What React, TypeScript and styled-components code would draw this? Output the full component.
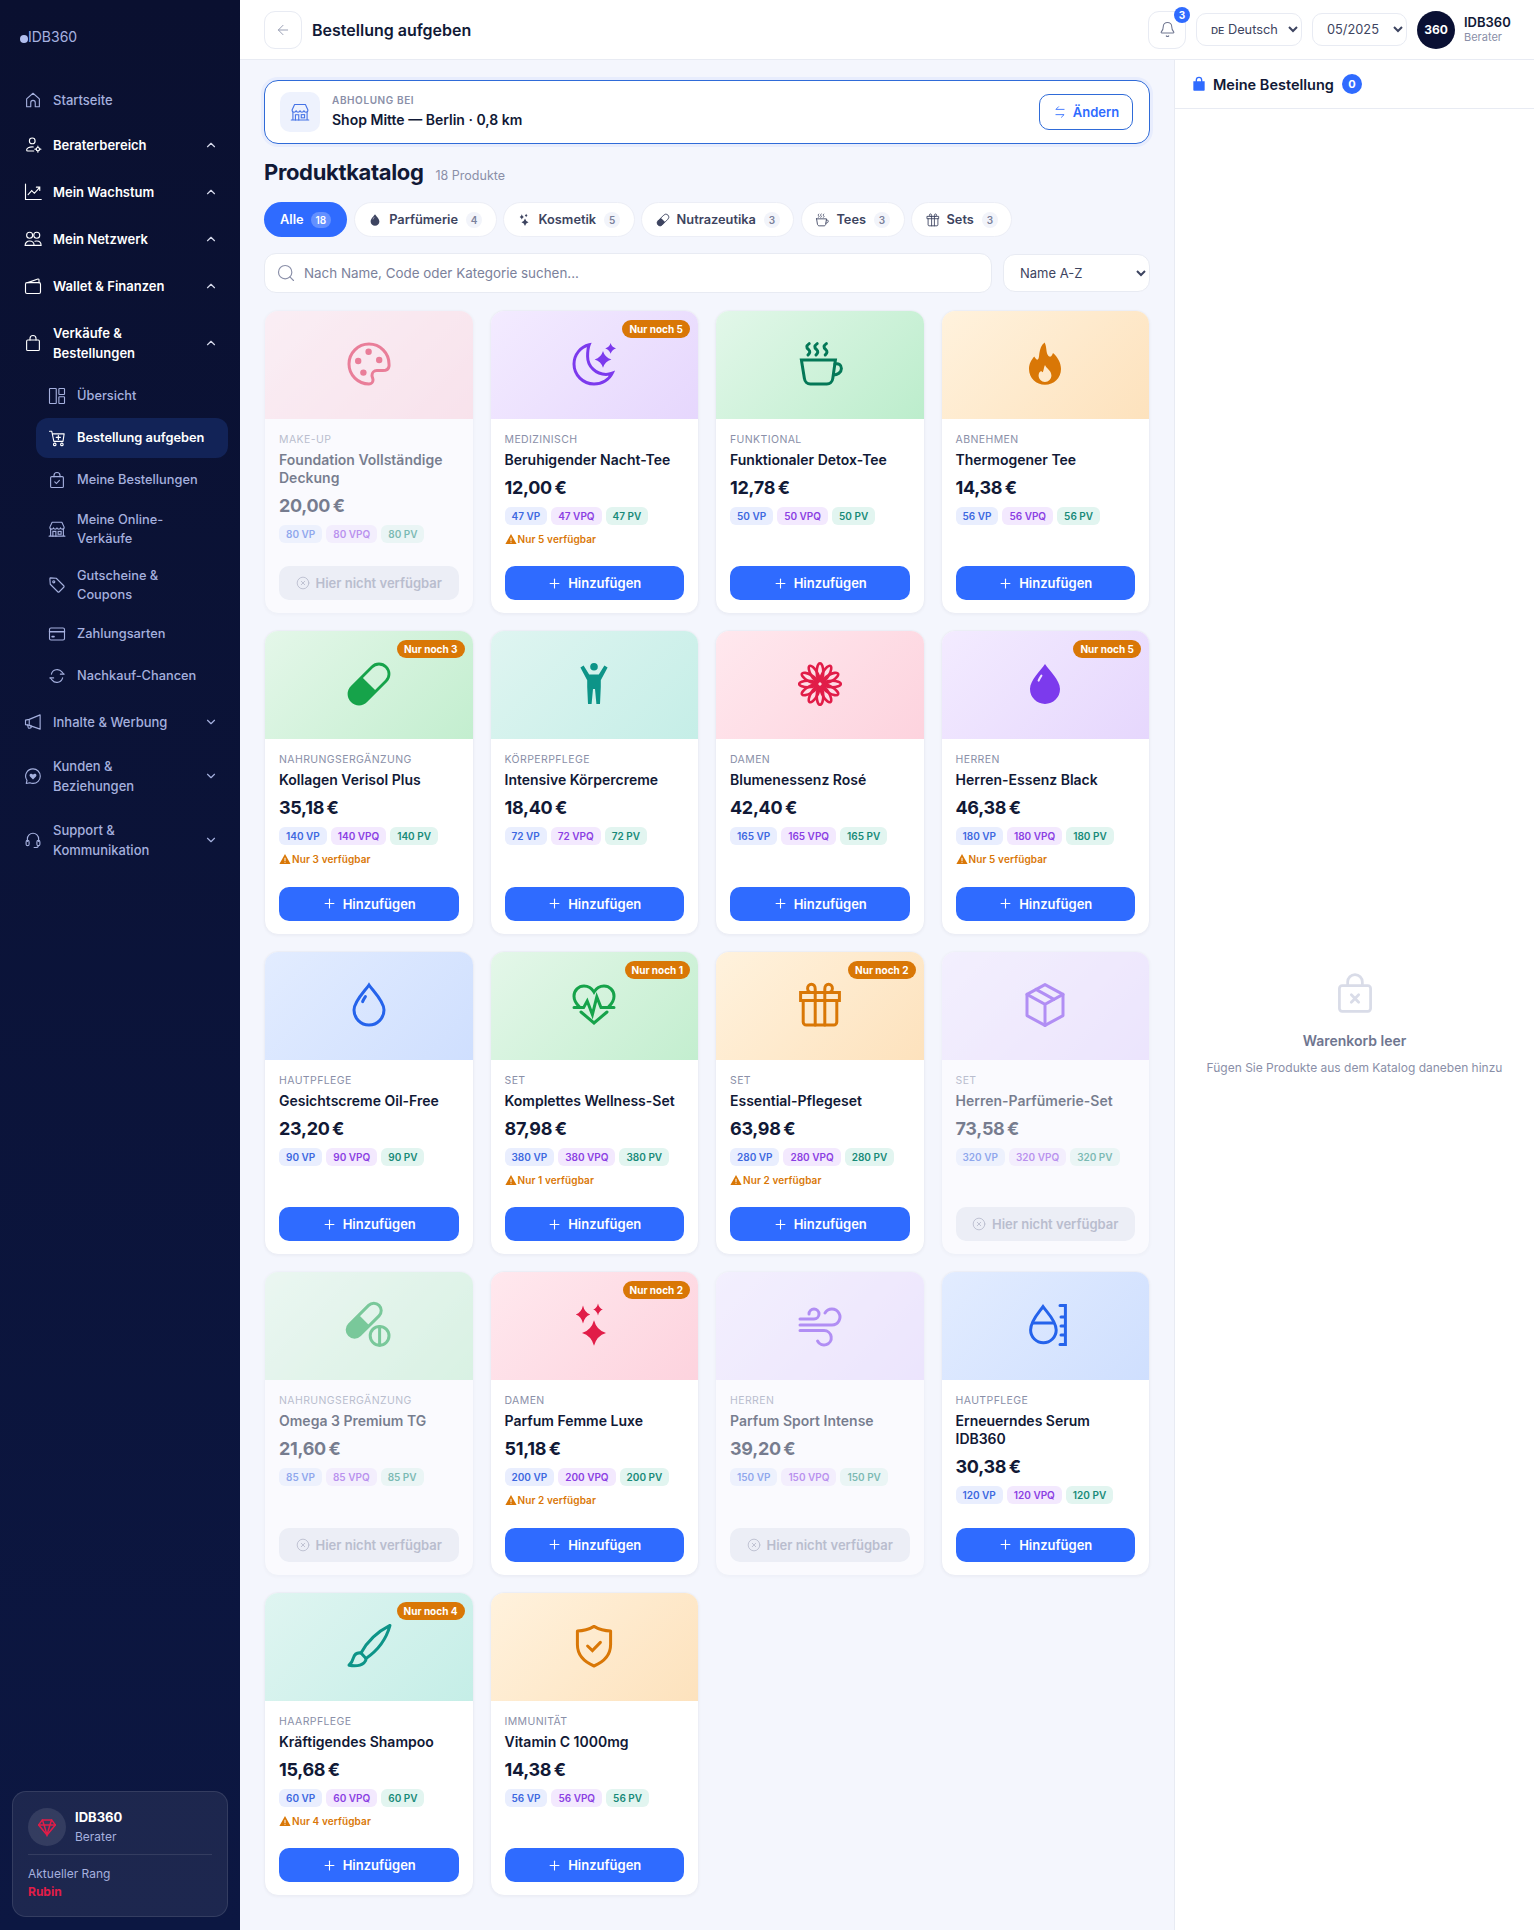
import React from 'react';
import styled, { createGlobalStyle } from 'styled-components';
import { ArrowLeft, Bell, ChevronDown, ChevronUp, Plus, Search, XCircle } from 'lucide-react';

const GlobalStyle = createGlobalStyle`
  * { box-sizing: border-box; }
  body {
    margin: 0;
    background: #f4f6fd;
    font-family: 'Inter', 'Liberation Sans', sans-serif;
    color: #111936;
  }
  select, input, button { font-family: inherit; }
`;

// 4-point star used by the sparkle style icons
const star = (cx: number, cy: number, rx: number, ry: number = rx) => {
  const kx = rx * 0.22;
  const ky = ry * 0.22;
  return `M${cx} ${cy - ry}Q${cx + kx} ${cy - ky} ${cx + rx} ${cy}Q${cx + kx} ${cy + ky} ${cx} ${cy + ry}Q${cx - kx} ${cy + ky} ${cx - rx} ${cy}Q${cx - kx} ${cy - ky} ${cx} ${cy - ry}Z`;
};

const F = { fill: 'currentColor', stroke: 'none' };

const glyphs: Record<string, React.ReactNode> = {
  palette: (
    <>
      <path d="M12 2C6.5 2 2 6.5 2 12s4.5 10 10 10c1.2 0 2-.9 2-2 0-.8-.5-1.400-.5-2.300 0-1.300 1-2.400 2.400-2.400h3c1.600 0 2.900-.6 3.100-2.200.1-.4 0-.9 0-1.100C22 6.500 17.500 2 12 2z" />
      <circle cx="11.800" cy="5.900" r="1.600" {...F} />
      <circle cx="17.100" cy="10" r="1.600" {...F} />
      <circle cx="6.600" cy="10.500" r="1.600" {...F} />
      <circle cx="9.200" cy="16.300" r="1.600" {...F} />
    </>
  ),
  moon: (
    <>
      <path d="M9.600 2.400C5.300 3.400 2 7.300 2 12c0 5.500 4.500 10 10 10 4.100 0 7.600-2.200 9.100-5.400-1 .4-2.100.6-3.100.6-5 0-9.200-4-9.200-9 0-2 .2-4.300.8-5.800z" />
      <path d={star(16.5, 9.7, 4.2)} {...F} />
      <path d={star(20.3, 4.2, 2.7)} {...F} />
    </>
  ),
  coffee: (
    <>
      <path d="M2.700 10h17l-1.300 9.200c-.2 1.600-1.400 2.800-3 2.800H7.200c-1.600 0-2.800-1.200-3-2.800L2.700 10z" />
      <path d="M19.500 12c1.800-.5 3.200.5 3.200 2.200 0 2-2 3.300-4 3.300" />
      <path d="M6.600 1.800c-1.500 1.100-1.500 1.900-.4 2.900 1 .9.900 1.900-.2 2.800M10.600 1.800c-1.500 1.100-1.500 1.900-.4 2.900 1 .9.900 1.900-.2 2.800M15.200 1.800c-1.500 1.100-1.500 1.900-.4 2.900 1 .9.900 1.900-.2 2.800" />
    </>
  ),
  fire: (
    <path
      {...F}
      fillRule="evenodd"
      d="M11.800 1.300c1.200 2.400.6 4.600 1.600 6.200.6 1 1.600 1.200 2.200-.1l.4-.9c2.300 2 4 5 4 8 0 4.600-3.600 7.900-8 7.900s-8-3.300-8-7.900c0-2.600 1.200-4.500 2.600-6.200.6 1 1.100 1.500 1.600 1.600.9-.4.8-2.200 1-3.400.3-2 1-4 2.600-5.200zM12 12.500c.4 1.500 3.200 2.600 3.200 5.300 0 1.800-1.400 3.200-3.200 3.200s-3.200-1.400-3.200-3.200c0-1.400.8-2.200 1.300-2.300.3.3.5.6.8.6.5-1 .5-2.500 1.100-3.600z"
    />
  ),
  pill: (
    <g transform="rotate(-45 12 12)">
      <rect x="-0.070" y="7" width="24.140" height="10" rx="5" strokeWidth="1.400" />
      <path {...F} d="M12 7H5a5 5 0 0 0 0 10h7z" />
    </g>
  ),
  person: (
    <>
      <circle cx="12" cy="3.400" r="1.900" {...F} />
      <path
        {...F}
        d="M5.200 3.700L6.800 2.800l2.800 4.400h4.800l2.800-4.400 1.600.9-3.400 6.400v3.400L15 22h-1.800l-.7-7.500h-1L10.800 22H9l-.4-8.500v-3.400z"
      />
    </>
  ),
  flower: (
    <>
      {Array.from({ length: 12 }).map((_, i) => (
        <ellipse key={i} cx="12" cy="6" rx="1.650" ry="4.400" strokeWidth="1.300" transform={`rotate(${i * 30} 12 12)`} />
      ))}
      <circle cx="12" cy="12" r="1.500" strokeWidth="1.300" />
    </>
  ),
  dropFill: (
    <>
      <path {...F} d="M12 2C10 5 4.500 10 4.500 14.500a7.500 7.500 0 0 0 15 0C19.500 10 14 5 12 2z" />
      <path d="M10.200 7.800c-.6.9-1.100 1.700-1.400 2.500" stroke="#f0e4ff" strokeWidth="1" />
    </>
  ),
  drop: (
    <>
      <path d="M12 2C10 5 4.500 10 4.500 14.500a7.500 7.500 0 0 0 15 0C19.500 10 14 5 12 2z" />
      <path d="M10.200 7.800c-.6.9-1.100 1.700-1.400 2.500" />
    </>
  ),
  heart: (
    <>
      <path d="M4.600 12.800C3 11.200 2 9.500 2 7.600 2 4.700 4.300 2.500 7 2.500c2 0 3.800 1 5 3 1.200-2 3-3 5-3 2.700 0 5 2.200 5 5.100 0 1.900-1 3.600-2.600 5.200" />
      <path d="M5.500 15.500L12 21l6.500-5.500" />
      <path d="M2 13.300h4.800l1.800-3.300 2.600 6.800L13.400 8l2.100 5.300H22" />
    </>
  ),
  gift: (
    <>
      <path d="M2.300 5.800h19.400v4H2.300zM3.600 9.800v10.700c0 .8.700 1.500 1.500 1.500h13.800c.8 0 1.500-.7 1.500-1.500V9.800" />
      <path d="M9.600 5.800V22M14.400 5.800V22" />
      <path d="M9.600 5.800V4c0-1.400-.8-2.400-1.900-2.400S5.800 2.500 5.800 3.700c0 1.300 1 2.100 2.400 2.100M14.400 5.800V4c0-1.400.8-2.400 1.900-2.400s1.900.9 1.900 2.100c0 1.300-1 2.100-2.400 2.100" />
    </>
  ),
  box: (
    <>
      <path d="M12 1.800l9 4.900v10.600l-9 4.900-9-4.900V6.700z" strokeLinejoin="round" />
      <path d="M3 6.700l9 5 9-5M12 11.700v10.500M7.500 4.200l9 5" />
    </>
  ),
  pills: (
    <>
      <g transform="rotate(-45 9.600 9.600)">
        <rect x="-0.900" y="5.900" width="21" height="7.400" rx="3.700" />
        <path {...F} d="M9.600 5.900H2.800a3.700 3.700 0 0 0 0 7.400h6.800z" />
      </g>
      <circle cx="17.300" cy="17.400" r="4.700" />
      <path d="M17.300 12.700v9.400" />
    </>
  ),
  stars: (
    <>
      <path d={star(12, 16, 6, 6.400)} {...F} />
      <path d={star(6.500, 6.700, 3.600, 4.500)} {...F} />
      <path d={star(14, 4.200, 2.400, 3)} {...F} />
    </>
  ),
  wind: (
    <>
      <path d="M2 9h7a2.500 2.500 0 1 0-2.500-2.500" />
      <path d="M2 12h16a4 4 0 1 0-3.500-6" />
      <path d="M2 14.800h12a3.600 3.600 0 1 1-3.200 5.200" />
    </>
  ),
  serum: (
    <>
      <path d="M11 2.800C9.200 5.500 4.800 9.800 4.800 14.500a6.400 6.400 0 0 0 12.800 0C17.600 9.800 12.800 5.500 11 2.800z" />
      <path d="M6 11h10" />
      <path d="M19.500 2.300h2.700v19.400h-2.700M20 8h2.200M20 12.500h2.200M20 17h2.200" />
    </>
  ),
  brush: (
    <>
      <path d="M22.500 1.700C16 5 11 10 8 15.500l2.500 2.700C16 14.500 20.500 9 22.500 1.700z" strokeLinejoin="round" />
      <path d="M8 15.500c-2-.3-3.300.7-3.800 2.400-.3 1.200-1 2.600-2.200 3.700 3 .5 6 .1 7.500-1.200.8-.7 1.100-1.500 1-2.200" strokeLinejoin="round" />
    </>
  ),
  shield: (
    <>
      <path d="M12 2.200C9.500 3.700 6.500 4.500 3.700 4.500v6.800c0 5 3.500 8.700 8.300 10.700 4.800-2 8.300-5.700 8.300-10.700V4.500c-2.800 0-5.800-.8-8.300-2.300z" strokeLinejoin="round" />
      <path d="M8.800 12l2.400 2.300 4-4.100" />
    </>
  ),
  home: <path d="M12 3l8.500 7.500V21H15v-5.500a3 3 0 0 0-6 0V21H3.500V10.500z" strokeLinejoin="round" />,
  userGear: (
    <>
      <circle cx="11" cy="6.500" r="3.800" />
      <path d="M12.500 14.600c-.5-.1-1-.1-1.500-.1-4 0-7.500 1.800-7.500 4.200 0 .8.700 1.300 1.500 1.300h8" />
      <circle cx="18.500" cy="17.500" r="2.200" />
      <path d="M18.500 13.500v1.800M18.500 19.700v1.800M14.500 17.500h1.800M20.700 17.500h1.800" />
    </>
  ),
  chart: (
    <>
      <path d="M2 1.500V22h21" />
      <path d="M5.500 15.500l4.800-5.300 3.500 3.500 7-7.700M16.500 5.500H21V10" />
    </>
  ),
  users: (
    <>
      <circle cx="7.500" cy="7" r="4" />
      <circle cx="17" cy="7" r="4" />
      <path d="M1.500 20.500c0-3.300 2.600-5.800 6-5.800s6 2.500 6 5.800zM14.500 14.900c.8-.2 1.600-.2 2.500-.2 3.400 0 5.800 2.500 5.800 5.800h-9" />
    </>
  ),
  wallet: (
    <>
      <rect x="2" y="7.500" width="20" height="14.500" rx="2" />
      <path d="M5 7.500l13.500-4.800c1-.3 1.500.2 1.500 1.200v3.600" />
    </>
  ),
  bag: (
    <>
      <rect x="3.500" y="8" width="17" height="14" rx="1.500" />
      <path d="M8 8V6a4 4 0 0 1 8 0v2" />
    </>
  ),
  bagFill: (
    <>
      <path {...F} d="M3.500 8h17v12.500c0 .8-.7 1.500-1.500 1.500H5c-.8 0-1.500-.7-1.500-1.500z" />
      <path d="M8 10V6a4 4 0 0 1 8 0v4" strokeWidth="2" />
    </>
  ),
  bagX: (
    <>
      <rect x="3.500" y="8" width="17" height="14" rx="1.500" />
      <path d="M8 8V6a4 4 0 0 1 8 0v2M10 13l4 4M14 13l-4 4" />
    </>
  ),
  layout: (
    <>
      <rect x="2" y="2" width="9" height="20" rx=".8" />
      <rect x="14.500" y="2" width="7.500" height="8" rx=".8" />
      <rect x="14.500" y="13" width="7.500" height="9" rx=".8" />
    </>
  ),
  cart: (
    <>
      <path d="M2 3h3l2.800 13.500h12.200l1.500-10H5.800" strokeLinejoin="round" />
      <circle cx="9" cy="20.500" r="1.700" />
      <circle cx="18.500" cy="20.500" r="1.700" />
      <path d="M13.800 8.500v5.500M11 11.200h5.500" />
    </>
  ),
  bagCheck: (
    <>
      <rect x="3.500" y="7.500" width="17" height="14.500" rx="1.500" />
      <path d="M8 7.500V6a4 4 0 0 1 8 0v1.500M9 14.500l2.200 2.200 4-4.200" />
    </>
  ),
  store: (
    <>
      <path d="M5.500 3h13l3 6.500c0 1.600-1.200 2.700-2.400 2.700-1.100 0-2.100-.8-2.400-1.800-.3 1-1.400 1.800-2.400 1.800S12.300 11.400 12 10.400c-.3 1-1.300 1.800-2.300 1.800s-2.100-.8-2.400-1.800c-.3 1-1.300 1.800-2.400 1.800-1.200 0-2.400-1.100-2.400-2.700z" strokeLinejoin="round" />
      <path d="M3.500 12.200V21.500h17v-9.300M1.500 21.500h21" />
      <path d="M6.500 21.500v-6.300h4v6.300" />
      <rect x="13.500" y="15.200" width="4" height="3.800" />
    </>
  ),
  tag: (
    <>
      <path d="M3.500 2.500l7.500.5 10 10c.6.6.6 1.500 0 2l-6 6c-.6.6-1.400.6-2 0l-10-10-.5-7.500c0-.5.5-1 1-1z" strokeLinejoin="round" />
      <circle cx="7.700" cy="7.700" r="1.400" />
    </>
  ),
  card: (
    <>
      <rect x="2" y="4" width="20" height="16" rx="2" />
      <path d="M2 9h20" strokeWidth="2" />
      <path d="M5.500 15.500h2.500" strokeWidth="2.200" />
    </>
  ),
  refresh: (
    <>
      <path d="M4.500 9.500A8 8 0 0 1 18.500 6.500L20.500 9" />
      <path d="M19.500 14.500A8 8 0 0 1 5.500 17.500L3.500 15" />
      <path d="M21.500 9.500h-5M2.500 14.500h5" />
    </>
  ),
  megaphone: (
    <>
      <path d="M2 9.500l5-1v8l-5-1zM7 8.500L21.500 2.500v19L7 16.500" strokeLinejoin="round" />
      <path d="M4.800 15.800l.9 3.700c.2.700.8 1 1.500.8l1.600-.5c.7-.2 1-.9.800-1.500l-.6-2" />
    </>
  ),
  chatHeart: (
    <>
      <path d="M12 2.500a9.700 9.700 0 0 1 0 19.400c-1.500 0-2.900-.3-4.200-.9l-4.800 1 1-4.200A9.700 9.700 0 0 1 12 2.500z" strokeLinejoin="round" />
      <path {...F} d="M12 16.500l-4-4c-1-1.100-.8-3 .8-3.500 1.200-.4 2.500.1 3.200 1.200.7-1.100 2-1.600 3.200-1.200 1.600.5 1.800 2.400.8 3.500z" />
    </>
  ),
  headset: (
    <>
      <path d="M4.500 14v-3.500a7.500 7.500 0 0 1 15 0V14" />
      <rect x="2.800" y="12.500" width="4" height="7" rx="2" />
      <rect x="17.200" y="12.500" width="4" height="7" rx="2" />
      <path d="M19 19.500c0 1.500-1.500 2.500-3 2.500h-2.500" />
    </>
  ),
  swap: <path d="M9.500 3L5 7.500h14M14.500 21L19 16.500H5" strokeLinejoin="round" />,
  gem: (
    <>
      <path d="M6.500 3.500h11L22 9.500 12 21.500 2 9.500z" strokeLinejoin="round" />
      <path d="M2 9.500h20M8.500 9.500L12 21.500l3.500-12M6.500 3.500l2 6M17.500 3.500l-2 6" />
    </>
  ),
  warn: <path {...F} fillRule="evenodd" d="M12 2L.8 22h22.400zM11 9.500h2v6.500h-2zM11 17.500h2v2.200h-2z" />,
};

const Glyph = ({ name, size = 18, weight = 1.5 }: { name: string; size?: number; weight?: number }) => (
  <svg
    viewBox="0 0 24 24"
    width={size}
    height={size}
    fill="none"
    stroke="currentColor"
    strokeWidth={weight}
    strokeLinecap="round"
    style={{ flexShrink: 0 }}
  >
    {glyphs[name]}
  </svg>
);

/* layout */
const Shell = styled.div`
  display: flex;
  min-height: 100vh;
`;

const Sidebar = styled.aside`
  width: 240px;
  flex-shrink: 0;
  display: flex;
  flex-direction: column;
  background: linear-gradient(180deg, #0a1030 0%, #0c1742 100%);
  padding: 0 12px 13px;
`;

const Logo = styled.div`
  height: 81px;
  padding: 28px 0 0 8px;
  display: flex;
  align-items: flex-start;
  font-size: 14px;
  line-height: 18px;
  color: #a7b2e0;
`;

const LogoDot = styled.span`
  width: 8px;
  height: 8px;
  flex-shrink: 0;
  border-radius: 50%;
  background: #b3bfee;
  margin-top: 7px;
`;

const NavRow = styled.div<{ $strong?: boolean; $plain?: boolean; $tail: number }>`
  display: flex;
  align-items: center;
  gap: 11px;
  padding: ${(p) => (p.$plain ? '9px' : '11px')} 10px ${(p) => (p.$plain ? '9px' : '11px')} 12px;
  margin-bottom: ${(p) => p.$tail}px;
  font-size: 13px;
  line-height: 20px;
  font-weight: ${(p) => (p.$strong ? 600 : 500)};
  color: ${(p) => (p.$strong ? '#ffffff' : '#a5b0de')};
`;

const NavLabel = styled.span`
  flex: 1;
  min-width: 0;
`;

const NavChevron = styled.span<{ $open?: boolean }>`
  display: flex;
  color: ${(p) => (p.$open ? '#d5d9ea' : '#a5b0de')};
`;

const SubList = styled.div`
  display: flex;
  flex-direction: column;
  gap: 2px;
  padding-left: 24px;
  margin: -3px 0 5px;
`;

const SubRow = styled.div<{ $active?: boolean }>`
  display: flex;
  align-items: center;
  gap: 11px;
  min-height: 40px;
  padding: 7.500px 12px;
  border-radius: 12px;
  font-size: 12.800px;
  line-height: 19.500px;
  font-weight: ${(p) => (p.$active ? 600 : 500)};
  color: ${(p) => (p.$active ? '#ffffff' : '#a5b0de')};
  background: ${(p) => (p.$active ? '#122357' : 'transparent')};
`;

const RankCard = styled.div`
  margin-top: auto;
  border: 1px solid rgba(255, 255, 255, 0.1);
  border-radius: 14px;
  background: rgba(255, 255, 255, 0.07);
  padding: 16px 15px 15px;
`;

const RankTop = styled.div`
  display: flex;
  align-items: center;
  gap: 9px;
  padding-bottom: 8px;
  border-bottom: 1px solid rgba(255, 255, 255, 0.1);
`;

const RankAvatar = styled.div`
  width: 38px;
  height: 38px;
  border-radius: 50%;
  background: rgba(255, 255, 255, 0.1);
  color: #e11d48;
  display: flex;
  align-items: center;
  justify-content: center;
`;

const RankName = styled.div`
  font-size: 13px;
  line-height: 19px;
  font-weight: 700;
  color: #ffffff;
`;

const RankRole = styled.div`
  font-size: 12px;
  line-height: 19px;
  color: #a5b0de;
`;

const RankLabel = styled.div`
  margin-top: 10px;
  font-size: 12px;
  line-height: 18px;
  color: #a5b0de;
`;

const RankValue = styled.div`
  font-size: 12px;
  line-height: 18px;
  font-weight: 700;
  color: #e11d48;
`;

const Workspace = styled.div`
  flex: 1;
  min-width: 0;
  display: flex;
  flex-direction: column;
`;

const TopBar = styled.header`
  height: 60px;
  background: #ffffff;
  border-bottom: 1px solid #e8ebf3;
  display: flex;
  align-items: center;
  padding: 0 24px;
  gap: 10px;
`;

const SquareButton = styled.button`
  position: relative;
  width: 38px;
  height: 38px;
  padding: 0;
  border: 1px solid #e8ebf3;
  border-radius: 11px;
  background: #ffffff;
  color: #6f7690;
  display: flex;
  align-items: center;
  justify-content: center;
`;

const PageTitle = styled.h1`
  flex: 1;
  margin: 0;
  font-size: 16px;
  font-weight: 600;
  color: #111936;
`;

const CountDot = styled.span`
  position: absolute;
  top: -5px;
  right: -5px;
  width: 16px;
  height: 16px;
  border-radius: 50%;
  background: #2f6bff;
  color: #ffffff;
  font-size: 10px;
  font-weight: 700;
  display: flex;
  align-items: center;
  justify-content: center;
`;

const BarSelect = styled.select<{ $w: number }>`
  width: ${(p) => p.$w}px;
  height: 33px;
  padding: 0 4px 0 10px;
  border: 1px solid #e8ebf3;
  border-radius: 10px;
  background: #ffffff;
  font-size: 12.800px;
  color: #3d4460;
`;

const UserBox = styled.div`
  display: flex;
  align-items: center;
  gap: 9px;
  width: 93px;
`;

const UserAvatar = styled.div`
  width: 38px;
  height: 38px;
  flex-shrink: 0;
  border-radius: 50%;
  background: #0a1033;
  color: #ffffff;
  font-size: 12px;
  font-weight: 700;
  display: flex;
  align-items: center;
  justify-content: center;
`;

const UserName = styled.div`
  font-size: 13px;
  line-height: 16px;
  font-weight: 600;
`;

const UserRole = styled.div`
  font-size: 11px;
  line-height: 15px;
  color: #8a8fa8;
`;

const Split = styled.div`
  flex: 1;
  display: flex;
`;

const Catalog = styled.main`
  flex: 1;
  min-width: 0;
  padding: 20px 24px 33px;
`;

const PickupBox = styled.section`
  height: 64px;
  display: flex;
  align-items: center;
  padding: 0 15px;
  gap: 12px;
  background: #ffffff;
  border: 1.500px solid #2f6bd8;
  border-radius: 14px;
  box-shadow: 0 0 0 3px rgba(47, 107, 255, 0.06);
`;

const PickupIcon = styled.div`
  width: 40px;
  height: 40px;
  border-radius: 10px;
  background: #eef2fd;
  color: #4472e6;
  display: flex;
  align-items: center;
  justify-content: center;
`;

const PickupText = styled.div`
  flex: 1;
  padding-bottom: 2px;
`;

const PickupLabel = styled.div`
  font-size: 10px;
  line-height: 14px;
  font-weight: 600;
  letter-spacing: 0.6px;
  color: #8a8fa8;
`;

const PickupName = styled.div`
  margin-top: 4px;
  font-size: 14px;
  line-height: 18px;
  font-weight: 600;
`;

const ChangeButton = styled.button`
  width: 94px;
  height: 36px;
  margin-right: 1px;
  display: flex;
  align-items: center;
  justify-content: center;
  gap: 6px;
  background: #ffffff;
  border: 1.500px solid #2f6bd8;
  border-radius: 10px;
  color: #2f6bff;
  font-size: 13px;
  font-weight: 600;
`;

const CatalogHead = styled.div`
  display: flex;
  align-items: baseline;
  gap: 12px;
  margin-top: 13px;
  height: 32px;
`;

const CatalogTitle = styled.h2`
  margin: 0;
  font-size: 22px;
  line-height: 30px;
  font-weight: 700;
  letter-spacing: -0.35px;
  color: #111936;
`;

const CatalogCount = styled.span`
  font-size: 12.500px;
  color: #8a8fa8;
`;

const Pills = styled.div`
  display: flex;
  gap: 6.500px;
  margin-top: 13px;
`;

const Pill = styled.button<{ $active?: boolean }>`
  height: 35px;
  padding: 0 ${(p) => (p.$active ? 16 : 13.500)}px;
  display: flex;
  align-items: center;
  gap: 7px;
  border-radius: 18px;
  border: ${(p) => (p.$active ? 'none' : '1px solid #eceef6')};
  background: ${(p) => (p.$active ? '#2f6bff' : '#ffffff')};
  color: ${(p) => (p.$active ? '#ffffff' : '#3d4460')};
  font-size: 12.800px;
  font-weight: 600;
`;

const PillCount = styled.span<{ $active?: boolean }>`
  min-width: 16px;
  height: 16px;
  padding: 0 ${(p) => (p.$active ? 5 : 4)}px;
  margin-left: ${(p) => (p.$active ? 0 : 1)}px;
  border-radius: 8px;
  background: ${(p) => (p.$active ? 'rgba(255,255,255,0.25)' : '#f2f4fa')};
  color: ${(p) => (p.$active ? '#ffffff' : '#7b819b')};
  font-size: 10px;
  font-weight: 600;
  display: flex;
  align-items: center;
  justify-content: center;
`;

const SearchRow = styled.div`
  display: flex;
  align-items: center;
  gap: 11px;
  margin-top: 16px;
`;

const SearchBox = styled.label`
  flex: 1;
  height: 40px;
  display: flex;
  align-items: center;
  gap: 8px;
  padding: 0 11px;
  background: #ffffff;
  border: 1px solid #e8ebf3;
  border-radius: 12px;
  color: #8a8fa8;
`;

const SearchInput = styled.input`
  flex: 1;
  padding: 0;
  border: none;
  outline: none;
  background: transparent;
  font-size: 13.400px;
  &::placeholder {
    color: #7b819b;
  }
`;

const SortSelect = styled.select`
  width: 147px;
  height: 38px;
  padding: 0 2px 0 12px;
  background: #ffffff;
  border: 1px solid #e8ebf3;
  border-radius: 12px;
  font-size: 13px;
  color: #3d4460;
`;

const Grid = styled.div`
  display: grid;
  grid-template-columns: repeat(4, 1fr);
  grid-auto-rows: 304.500px;
  gap: 16px;
  margin-top: 16.900px;
`;

const Card = styled.article<{ $off?: boolean }>`
  display: flex;
  flex-direction: column;
  overflow: hidden;
  background: #ffffff;
  border: 1px solid #eceef6;
  border-radius: 14px;
  box-shadow: 0 1px 3px rgba(17, 25, 54, 0.04);
  opacity: ${(p) => (p.$off ? 0.55 : 1)};
`;

const tones: Record<string, [string, string, string]> = {
  rose: ['#ffe8ee', '#fdd3de', '#e11d48'],
  purple: ['#f3ebff', '#e6d7fd', '#7c3aed'],
  green: ['#e4f7e9', '#c3eecf', '#16a34a'],
  mint: ['#e2f7e9', '#bcedcc', '#047857'],
  orange: ['#fff2dd', '#fde2bd', '#d97706'],
  teal: ['#dff5f1', '#c5eee7', '#0d9488'],
  blue: ['#e2ecff', '#cfdffe', '#2563eb'],
};

const Visual = styled.div<{ $tone: string }>`
  position: relative;
  height: 108px;
  flex-shrink: 0;
  padding-bottom: 2px;
  display: flex;
  align-items: center;
  justify-content: center;
  background: linear-gradient(135deg, ${(p) => tones[p.$tone][0]}, ${(p) => tones[p.$tone][1]});
  color: ${(p) => tones[p.$tone][2]};
`;

const StockTag = styled.span`
  position: absolute;
  top: 9px;
  right: 8px;
  height: 18px;
  padding: 0 7px;
  border-radius: 9px;
  background: #d97706;
  color: #ffffff;
  font-size: 10px;
  font-weight: 700;
  line-height: 18px;
`;

const CardBody = styled.div`
  flex: 1;
  display: flex;
  flex-direction: column;
  padding: 14px 14px 13px;
`;

const Category = styled.div`
  font-size: 10.500px;
  line-height: 13px;
  letter-spacing: 0.400px;
  color: #8a8fa8;
`;

const ProductName = styled.div`
  margin-top: 5px;
  font-size: 14px;
  line-height: 18px;
  font-weight: 600;
  color: #111936;
`;

const Price = styled.div`
  margin-top: 8px;
  font-size: 18px;
  line-height: 22px;
  font-weight: 700;
  letter-spacing: -0.3px;
  color: #111936;
`;

const Chips = styled.div`
  display: flex;
  gap: 4px;
  margin-top: 8px;
`;

const chipColors = {
  vp: ['#e9eefe', '#3d68e0'],
  vpq: ['#f3e9fe', '#8b3fe3'],
  pv: ['#e2f5f0', '#178a78'],
};

const Chip = styled.span<{ $kind: keyof typeof chipColors }>`
  height: 18px;
  padding: 0 7px;
  border-radius: 6px;
  font-size: 10px;
  font-weight: 600;
  line-height: 18px;
  background: ${(p) => chipColors[p.$kind][0]};
  color: ${(p) => chipColors[p.$kind][1]};
`;

const LowStock = styled.div`
  display: flex;
  align-items: center;
  gap: 1px;
  margin-top: 8px;
  font-size: 10px;
  line-height: 12px;
  font-weight: 600;
  letter-spacing: 0.1px;
  color: #d97706;
`;

const AddButton = styled.button<{ $off?: boolean }>`
  margin-top: auto;
  height: 34px;
  flex-shrink: 0;
  display: flex;
  align-items: center;
  justify-content: center;
  gap: 6px;
  border: none;
  border-radius: 10px;
  font-size: 13px;
  font-weight: 600;
  background: ${(p) => (p.$off ? '#e6e8f1' : '#2f6bff')};
  color: ${(p) => (p.$off ? '#8a8fa8' : '#ffffff')};
`;

const CartPanel = styled.aside`
  width: 360px;
  flex-shrink: 0;
  display: flex;
  flex-direction: column;
  background: #ffffff;
  border-left: 1px solid #e8ebf3;
`;

const CartHead = styled.div`
  height: 49px;
  flex-shrink: 0;
  display: flex;
  align-items: center;
  gap: 6px;
  padding: 0 16px;
  border-bottom: 1px solid #e8ebf3;
  color: #2f6bff;
`;

const CartTitle = styled.div`
  margin-right: 2px;
  font-size: 14.500px;
  font-weight: 600;
  color: #111936;
`;

const CartCount = styled.span`
  width: 20px;
  height: 20px;
  border-radius: 50%;
  background: #2f6bff;
  color: #ffffff;
  font-size: 11px;
  font-weight: 700;
  display: flex;
  align-items: center;
  justify-content: center;
`;

const CartEmpty = styled.div`
  flex: 1;
  display: flex;
  flex-direction: column;
  align-items: center;
  justify-content: center;
  padding-top: 8px;
  color: #d9dce8;
`;

const EmptyTitle = styled.div`
  margin-top: 16px;
  font-size: 14px;
  line-height: 20px;
  font-weight: 600;
  color: #6f7690;
`;

const EmptyText = styled.div`
  margin-top: 8px;
  font-size: 12px;
  line-height: 18px;
  color: #8a8fa8;
`;

type Product = {
  cat: string;
  name: string;
  price: string;
  points: number;
  icon: string;
  tone: string;
  left?: number;
  off?: boolean;
};

const products: Product[] = [
  { cat: 'MAKE-UP', name: 'Foundation Vollständige Deckung', price: '20,00', points: 80, icon: 'palette', tone: 'rose', off: true },
  { cat: 'MEDIZINISCH', name: 'Beruhigender Nacht-Tee', price: '12,00', points: 47, icon: 'moon', tone: 'purple', left: 5 },
  { cat: 'FUNKTIONAL', name: 'Funktionaler Detox-Tee', price: '12,78', points: 50, icon: 'coffee', tone: 'mint' },
  { cat: 'ABNEHMEN', name: 'Thermogener Tee', price: '14,38', points: 56, icon: 'fire', tone: 'orange' },
  { cat: 'NAHRUNGSERGÄNZUNG', name: 'Kollagen Verisol Plus', price: '35,18', points: 140, icon: 'pill', tone: 'green', left: 3 },
  { cat: 'KÖRPERPFLEGE', name: 'Intensive Körpercreme', price: '18,40', points: 72, icon: 'person', tone: 'teal' },
  { cat: 'DAMEN', name: 'Blumenessenz Rosé', price: '42,40', points: 165, icon: 'flower', tone: 'rose' },
  { cat: 'HERREN', name: 'Herren-Essenz Black', price: '46,38', points: 180, icon: 'dropFill', tone: 'purple', left: 5 },
  { cat: 'HAUTPFLEGE', name: 'Gesichtscreme Oil-Free', price: '23,20', points: 90, icon: 'drop', tone: 'blue' },
  { cat: 'SET', name: 'Komplettes Wellness-Set', price: '87,98', points: 380, icon: 'heart', tone: 'green', left: 1 },
  { cat: 'SET', name: 'Essential-Pflegeset', price: '63,98', points: 280, icon: 'gift', tone: 'orange', left: 2 },
  { cat: 'SET', name: 'Herren-Parfümerie-Set', price: '73,58', points: 320, icon: 'box', tone: 'purple', off: true },
  { cat: 'NAHRUNGSERGÄNZUNG', name: 'Omega 3 Premium TG', price: '21,60', points: 85, icon: 'pills', tone: 'green', off: true },
  { cat: 'DAMEN', name: 'Parfum Femme Luxe', price: '51,18', points: 200, icon: 'stars', tone: 'rose', left: 2 },
  { cat: 'HERREN', name: 'Parfum Sport Intense', price: '39,20', points: 150, icon: 'wind', tone: 'purple', off: true },
  { cat: 'HAUTPFLEGE', name: 'Erneuerndes Serum IDB360', price: '30,38', points: 120, icon: 'serum', tone: 'blue' },
  { cat: 'HAARPFLEGE', name: 'Kräftigendes Shampoo', price: '15,68', points: 60, icon: 'brush', tone: 'teal', left: 4 },
  { cat: 'IMMUNITÄT', name: 'Vitamin C 1000mg', price: '14,38', points: 56, icon: 'shield', tone: 'orange' },
];

const navTop = [
  { label: 'Beraterbereich', icon: 'userGear' },
  { label: 'Mein Wachstum', icon: 'chart' },
  { label: 'Mein Netzwerk', icon: 'users' },
  { label: 'Wallet & Finanzen', icon: 'wallet' },
  { label: 'Verkäufe & Bestellungen', icon: 'bag' },
];

const navSub = [
  { label: 'Übersicht', icon: 'layout' },
  { label: 'Bestellung aufgeben', icon: 'cart', active: true },
  { label: 'Meine Bestellungen', icon: 'bagCheck' },
  { label: 'Meine Online-Verkäufe', icon: 'store' },
  { label: 'Gutscheine & Coupons', icon: 'tag' },
  { label: 'Zahlungsarten', icon: 'card' },
  { label: 'Nachkauf-Chancen', icon: 'refresh' },
];

const navBottom = [
  { label: 'Inhalte & Werbung', icon: 'megaphone' },
  { label: 'Kunden & Beziehungen', icon: 'chatHeart' },
  { label: 'Support & Kommunikation', icon: 'headset' },
];

const filters = [
  { label: 'Parfümerie', icon: 'dropFill', count: 4 },
  { label: 'Kosmetik', icon: 'stars', count: 5 },
  { label: 'Nutrazeutika', icon: 'pill', count: 3 },
  { label: 'Tees', icon: 'coffee', count: 3 },
  { label: 'Sets', icon: 'gift', count: 3 },
];

const ProductCard = ({ item }: { item: Product }) => (
  <Card $off={item.off}>
    <Visual $tone={item.tone}>
      <Glyph name={item.icon} size={48} />
      {item.left && <StockTag>Nur noch {item.left}</StockTag>}
    </Visual>
    <CardBody>
      <Category>{item.cat}</Category>
      <ProductName>{item.name}</ProductName>
      <Price>{item.price}{'\u2009'}€</Price>
      <Chips>
        <Chip $kind="vp">{item.points} VP</Chip>
        <Chip $kind="vpq">{item.points} VPQ</Chip>
        <Chip $kind="pv">{item.points} PV</Chip>
      </Chips>
      {item.left && (
        <LowStock>
          <Glyph name="warn" size={12} />
          Nur {item.left} verfügbar
        </LowStock>
      )}
      <AddButton $off={item.off}>
        {item.off ? <XCircle size={14} strokeWidth={1.5} /> : <Plus size={15} strokeWidth={1.75} />}
        {item.off ? 'Hier nicht verfügbar' : 'Hinzufügen'}
      </AddButton>
    </CardBody>
  </Card>
);

export default function App() {
  return (
    <>
      <GlobalStyle />
      <Shell>
        <Sidebar>
          <Logo>
            <LogoDot />
            IDB360
          </Logo>
          <NavRow $plain $tail={5}>
            <Glyph name="home" />
            <NavLabel>Startseite</NavLabel>
          </NavRow>
          {navTop.map((n) => (
            <NavRow key={n.label} $strong $tail={5}>
              <Glyph name={n.icon} />
              <NavLabel>{n.label}</NavLabel>
              <NavChevron $open>
                <ChevronUp size={14} />
              </NavChevron>
            </NavRow>
          ))}
          <SubList>
            {navSub.map((n) => (
              <SubRow key={n.label} $active={n.active}>
                <Glyph name={n.icon} />
                <NavLabel>{n.label}</NavLabel>
              </SubRow>
            ))}
          </SubList>
          {navBottom.map((n) => (
            <NavRow key={n.label} $tail={2}>
              <Glyph name={n.icon} />
              <NavLabel>{n.label}</NavLabel>
              <NavChevron>
                <ChevronDown size={14} />
              </NavChevron>
            </NavRow>
          ))}
          <RankCard>
            <RankTop>
              <RankAvatar>
                <Glyph name="gem" size={20} weight={1.8} />
              </RankAvatar>
              <div>
                <RankName>IDB360</RankName>
                <RankRole>Berater</RankRole>
              </div>
            </RankTop>
            <RankLabel>Aktueller Rang</RankLabel>
            <RankValue>Rubin</RankValue>
          </RankCard>
        </Sidebar>

        <Workspace>
          <TopBar>
            <SquareButton aria-label="Zurück">
              <ArrowLeft size={16} strokeWidth={1.5} color="#9aa0b5" />
            </SquareButton>
            <PageTitle>Bestellung aufgeben</PageTitle>
            <SquareButton aria-label="Benachrichtigungen">
              <Bell size={17} strokeWidth={1.5} />
              <CountDot>3</CountDot>
            </SquareButton>
            <BarSelect $w={106} defaultValue="de">
              <option value="de">ᴅᴇ Deutsch</option>
            </BarSelect>
            <BarSelect $w={95} defaultValue="05/2025">
              <option>05/2025</option>
            </BarSelect>
            <UserBox>
              <UserAvatar>360</UserAvatar>
              <div>
                <UserName>IDB360</UserName>
                <UserRole>Berater</UserRole>
              </div>
            </UserBox>
          </TopBar>

          <Split>
            <Catalog>
              <PickupBox>
                <PickupIcon>
                  <Glyph name="store" size={20} weight={1.3} />
                </PickupIcon>
                <PickupText>
                  <PickupLabel>ABHOLUNG BEI</PickupLabel>
                  <PickupName>Shop Mitte — Berlin · 0,8 km</PickupName>
                </PickupText>
                <ChangeButton>
                  <Glyph name="swap" size={14} />
                  Ändern
                </ChangeButton>
              </PickupBox>

              <CatalogHead>
                <CatalogTitle>Produktkatalog</CatalogTitle>
                <CatalogCount>18 Produkte</CatalogCount>
              </CatalogHead>

              <Pills>
                <Pill $active>
                  Alle
                  <PillCount $active>18</PillCount>
                </Pill>
                {filters.map((f) => (
                  <Pill key={f.label}>
                    <Glyph name={f.icon} size={14} />
                    {f.label}
                    <PillCount>{f.count}</PillCount>
                  </Pill>
                ))}
              </Pills>

              <SearchRow>
                <SearchBox>
                  <Search size={20} strokeWidth={1.4} />
                  <SearchInput placeholder="Nach Name, Code oder Kategorie suchen..." />
                </SearchBox>
                <SortSelect defaultValue="az">
                  <option value="az">Name A-Z</option>
                </SortSelect>
              </SearchRow>

              <Grid>
                {products.map((p) => (
                  <ProductCard key={p.name} item={p} />
                ))}
              </Grid>
            </Catalog>

            <CartPanel>
              <CartHead>
                <Glyph name="bagFill" size={16} />
                <CartTitle>Meine Bestellung</CartTitle>
                <CartCount>0</CartCount>
              </CartHead>
              <CartEmpty>
                <Glyph name="bagX" size={44} />
                <EmptyTitle>Warenkorb leer</EmptyTitle>
                <EmptyText>Fügen Sie Produkte aus dem Katalog daneben hinzu</EmptyText>
              </CartEmpty>
            </CartPanel>
          </Split>
        </Workspace>
      </Shell>
    </>
  );
}
